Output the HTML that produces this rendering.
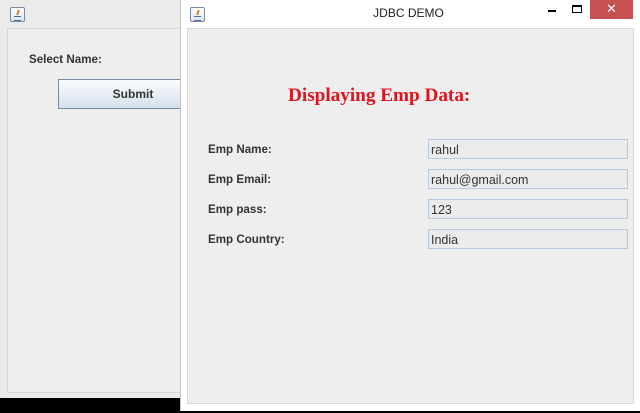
<!DOCTYPE html>
<html><head><meta charset="utf-8"><style>
*{margin:0;padding:0;box-sizing:border-box}
body{width:640px;height:413px;background:#000;position:relative;overflow:hidden;font-family:"Liberation Sans",Arial,sans-serif}
.abs{position:absolute}
.ico{position:absolute;width:15px;height:15px;border:1px solid #7a8aa0;border-radius:2px;background:linear-gradient(#fff,#dde4ee)}
.ico:after{content:"";position:absolute;left:3px;top:8px;width:7px;height:3px;border-top:1px solid #4a6a9a;border-bottom:1px solid #4a6a9a}
.ico:before{content:"";position:absolute;left:6px;top:2px;width:2px;height:5px;background:#d08030;transform:rotate(20deg)}
.lbl{position:absolute;font-size:11.6px;font-weight:bold;color:#333}
.fld{position:absolute;left:428px;width:200px;height:20px;border:1px solid #b8c8dc;background:#ececec;font-size:12.5px;color:#333;padding:3px 0 0 2px}
</style></head><body>
<div class="abs" style="left:0;top:0;width:181px;height:398px;background:#ebebeb;border-right:1px solid #ccc"></div>
<div class="ico" style="left:10px;top:7px"></div>
<div class="abs" style="left:7px;top:28px;width:180px;height:365px;border:1px solid #d6d6d6;background:#eeeeee"></div>
<div class="lbl" style="left:29px;top:53px">Select Name:</div>
<div class="abs" style="left:58px;top:79px;width:130px;height:30px;border:1px solid #7a8ba3;background:linear-gradient(#fbfcfd,#d5e0ed);font-size:12px;font-weight:bold;color:#333;text-align:center;line-height:28px;padding-left:20px">Submit</div>
<div class="abs" style="left:180px;top:0;width:460px;height:411px;background:#fff;border-left:1px solid #c8c8c8"></div>
<div class="ico" style="left:190px;top:7px"></div>
<div class="abs" style="left:181px;top:6px;width:455px;text-align:center;font-size:12px;color:#222">JDBC DEMO</div>
<div class="abs" style="left:548px;top:10px;width:8px;height:2px;background:#000"></div>
<div class="abs" style="left:572px;top:5px;width:10px;height:8px;border:1px solid #000;border-top-width:2px"></div>
<div class="abs" style="left:590px;top:0;width:43px;height:19px;background:#c75050;color:#fff;text-align:center;font-size:13px;line-height:18px">✕</div>
<div class="abs" style="left:187px;top:28px;width:447px;height:376px;border:1px solid #d8d8d8;background:#eeeeee"></div>
<div class="abs" style="left:288px;top:85px;font-family:'Liberation Serif',serif;font-weight:bold;font-size:19.2px;color:#e0141e">Displaying Emp Data:</div>
<div class="lbl" style="left:208px;top:143px">Emp Name:</div>
<div class="lbl" style="left:208px;top:173px">Emp Email:</div>
<div class="lbl" style="left:208px;top:203px">Emp pass:</div>
<div class="lbl" style="left:208px;top:233px">Emp Country:</div>
<div class="fld" style="top:139px">rahul</div>
<div class="fld" style="top:169px">rahul@gmail.com</div>
<div class="fld" style="top:199px">123</div>
<div class="fld" style="top:229px">India</div>
</body></html>
